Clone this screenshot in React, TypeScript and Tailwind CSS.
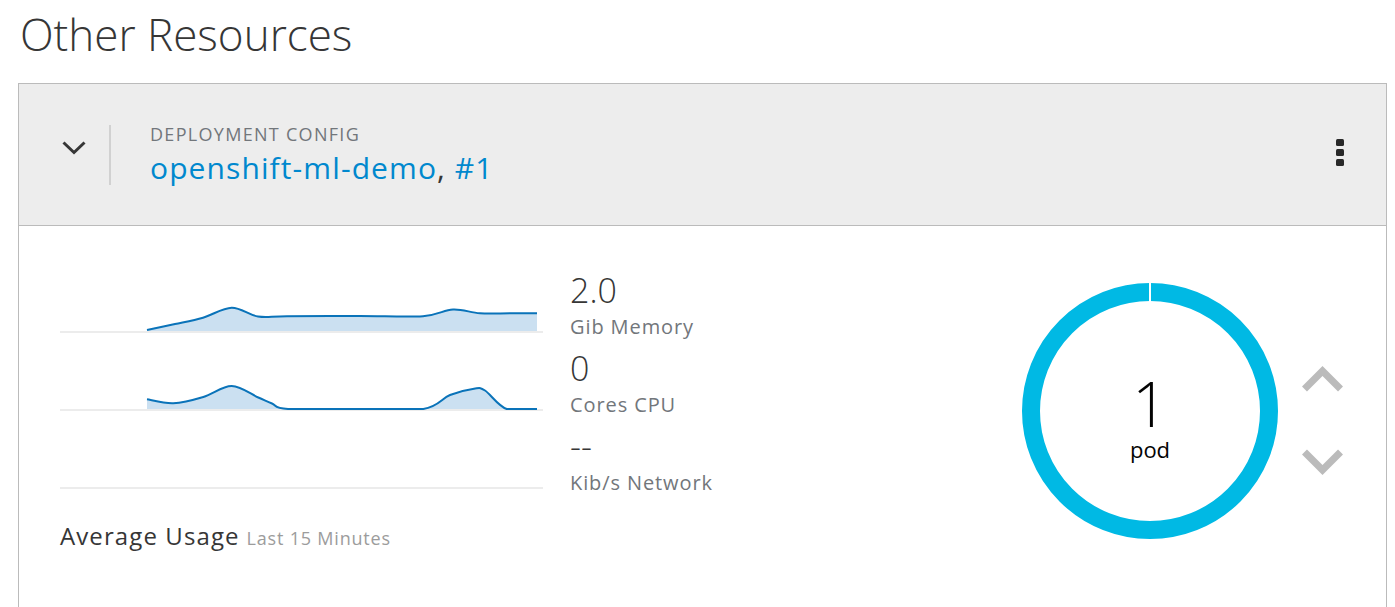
import React from "react";

type P = [number, number];

function smooth(pts: P[], base: number): string {
  let d = `M${pts[0][0]},${pts[0][1]}`;
  for (let i = 0; i < pts.length - 1; i++) {
    const p0 = pts[i - 1] || pts[i];
    const p1 = pts[i];
    const p2 = pts[i + 1];
    const p3 = pts[i + 2] || p2;
    const c1x = p1[0] + (p2[0] - p0[0]) / 6;
    const c1y = Math.min(base, p1[1] + (p2[1] - p0[1]) / 6);
    const c2x = p2[0] - (p3[0] - p1[0]) / 6;
    const c2y = Math.min(base, p2[1] - (p3[1] - p1[1]) / 6);
    d += ` C${c1x.toFixed(1)},${c1y.toFixed(1)} ${c2x.toFixed(1)},${c2y.toFixed(1)} ${p2[0]},${p2[1]}`;
  }
  return d;
}

function Spark({ pts, base }: { pts?: P[]; base: number }) {
  const line = pts ? smooth(pts, base) : "";
  const area = pts
    ? `${line} L${pts[pts.length - 1][0]},${base} L${pts[0][0]},${base} Z`
    : "";
  return (
    <svg width={483} height={78} viewBox="0 0 483 78" className="block shrink-0">
      <rect x={0} y={base} width={483} height={2} fill="#ececec" />
      {pts && (
        <>
          <path d={area} fill="#cbe0f1" />
          <path d={line} fill="none" stroke="#0a73b9" strokeWidth={2} />
        </>
      )}
    </svg>
  );
}

const mem: P[] = [
  [87, 69],
  [115, 63],
  [143, 56.7],
  [171.7, 46.7],
  [198, 55.5],
  [227, 55.2],
  [300, 55],
  [363, 55.2],
  [393, 48.5],
  [420, 52.3],
  [450, 52.3],
  [477, 52.3],
];

const cpu: P[] = [
  [87, 60.3],
  [113.3, 64.3],
  [143.3, 58],
  [171.7, 47],
  [198.3, 58.5],
  [212, 64.5],
  [228, 70],
  [300, 70],
  [363.3, 70],
  [390, 56],
  [414, 49.7],
  [425, 51.5],
  [446.7, 70],
  [477, 70],
];

function Metric({ value, label }: { value: string; label: string }) {
  return (
    <div className="pt-[11px]">
      <div className="text-[34px] leading-[36px] font-light text-[#363636]">{value}</div>
      <div className="mt-[7px] text-[20px] leading-[24px] tracking-[0.9px] text-[#72767b]">
        {label}
      </div>
    </div>
  );
}

export default function App() {
  return (
    <div
      className="w-[1395px] h-[607px] overflow-hidden bg-white"
      style={{ fontFamily: '"Open Sans", "Liberation Sans", sans-serif' }}
    >
      <h1 className="mt-[7px] ml-[20px] text-[44px] leading-[54px] font-light text-[#363636]">
        Other Resources
      </h1>
      <div className="mt-[22px] ml-[18px] w-[1369px] border border-[#bbbbbb] border-b-0 h-[600px]">
        {/* header */}
        <div className="h-[142px] bg-[#ededed] border-b border-[#bbbbbb] flex items-center pl-[42px] pr-[42px]">
          <svg width={26} height={16} viewBox="0 0 26 16" className="mb-[13px] shrink-0">
            <polyline
              points="2.5,2.5 13,12.5 23.5,2.5"
              fill="none"
              stroke="#363636"
              strokeWidth={3}
            />
          </svg>
          <div className="ml-[22px] w-[2px] h-[60px] bg-[#d1d1d1]" />
          <div className="ml-[39px] mt-[-1px]">
            <div className="text-[18px] leading-[22px] tracking-[1.3px] text-[#72767b] uppercase">
              Deployment Config
            </div>
            <div className="mt-[5px] text-[30px] leading-[36px] tracking-[1.1px] text-[#363636]">
              <span className="text-[#0088ce]">openshift-ml-demo</span>,{" "}
              <span className="text-[#0088ce]">#1</span>
            </div>
          </div>
          <div className="ml-auto mb-[5px] flex flex-col gap-[3px]">
            <div className="w-[8px] h-[7px] rounded-[1.5px] bg-[#292929]" />
            <div className="w-[8px] h-[7px] rounded-[1.5px] bg-[#292929]" />
            <div className="w-[8px] h-[7px] rounded-[1.5px] bg-[#292929]" />
          </div>
        </div>
        {/* body */}
        <div className="flex pt-[35px] pl-[41px] pr-[42px]">
          <div>
            <div className="flex h-[78px]">
              <Spark pts={mem} base={70} />
              <div className="ml-[27px]">
                <Metric value="2.0" label="Gib Memory" />
              </div>
            </div>
            <div className="flex h-[78px]">
              <Spark pts={cpu} base={70} />
              <div className="ml-[27px]">
                <Metric value="0" label="Cores CPU" />
              </div>
            </div>
            <div className="flex h-[78px]">
              <Spark base={70} />
              <div className="ml-[27px]">
                <Metric value="--" label="Kib/s Network" />
              </div>
            </div>
            <div className="mt-[27px] flex items-baseline gap-[7px]">
              <span className="text-[24px] leading-[28px] tracking-[1.1px] text-[#363636]">
                Average Usage
              </span>
              <span className="text-[18px] leading-[24px] tracking-[0.8px] text-[#9c9c9c]">
                Last 15 Minutes
              </span>
            </div>
          </div>
          <div className="ml-auto flex">
            <div className="relative mt-[22px] w-[256px] h-[256px] rounded-full border-[18px] border-[#00b9e4] flex flex-col items-center justify-center pt-[20px]">
              <div className="absolute top-[-18px] left-[109px] w-[2px] h-[18px] bg-white" />
              <div className="text-[62px] leading-[46px] font-light text-[#030303]">1</div>
              <div className="mt-[10px] text-[22px] leading-[26px] text-[#030303]">pod</div>
            </div>
            <div className="ml-[23px] mt-[103px] flex flex-col">
              <svg width={43} height={32} viewBox="0 0 43 32">
                <polyline
                  points="3.5,25 21.5,7 39.5,25"
                  fill="none"
                  stroke="#bbbbbb"
                  strokeWidth={7}
                  strokeLinejoin="miter"
                />
              </svg>
              <svg width={43} height={32} viewBox="0 0 43 32" className="mt-[49px]">
                <polyline
                  points="3.5,7 21.5,25 39.5,7"
                  fill="none"
                  stroke="#bbbbbb"
                  strokeWidth={7}
                  strokeLinejoin="miter"
                />
              </svg>
            </div>
          </div>
        </div>
      </div>
    </div>
  );
}
